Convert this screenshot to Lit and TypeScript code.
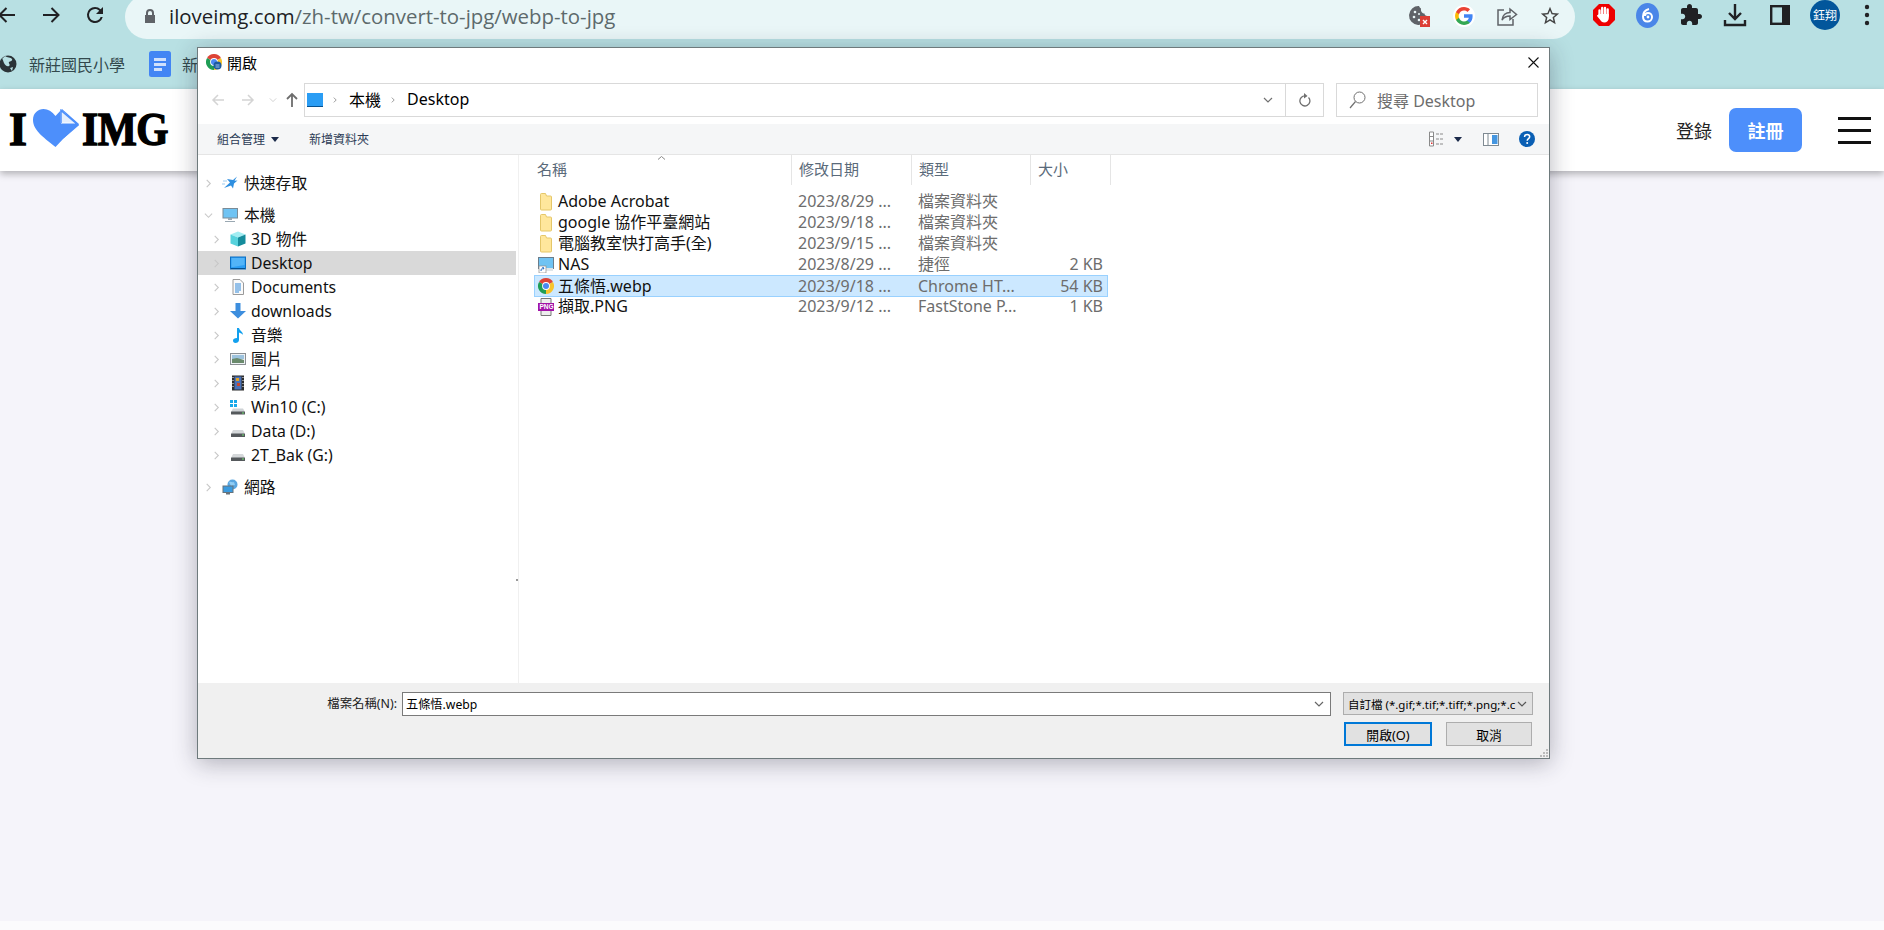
import { LitElement, html, css, svg } from "lit";
import { customElement } from "lit/decorators.js";

const chrome = (s: number, badge = false) => html`<svg width=${s} height=${s} viewBox="0 0 16 16">
  <path d="M1.07 4A8 8 0 0 1 14.93 4L8 8Z" fill="#dd4437"/>
  <path d="M14.93 4A8 8 0 0 1 8 16L8 8Z" fill="#f7c42d"/>
  <path d="M8 16A8 8 0 0 1 1.07 4L8 8Z" fill="#1f9d55"/>
  <circle cx="8" cy="8" r="3.9" fill="#fff"/><circle cx="8" cy="8" r="3" fill="#4a89f3"/>
  ${badge ? svg`<circle cx="11.500" cy="11.500" r="4" fill="#1d5a9e"/><path d="M9.500 11h4M9.500 13h4" stroke="#9cc3ee"/>` : ""}</svg>`;

const chev = svg`<path d="M3 1l4 4-4 4" fill="none" stroke="currentColor" stroke-width="1.2"/>`;
const chevDown = svg`<path d="M1 3l4 4 4-4" fill="none" stroke="currentColor" stroke-width="1.2"/>`;

const ic: Record<string, any> = {
  star: svg`<path d="M15 1.500 11 5 5 4l3 3.500L2 13l7-2.500 2 3 1-5 3.500-3-3 .2z" fill="#2f8fe0"/><path d="M1 6h4M0 9h3" stroke="#9ccbef"/>`,
  pc: svg`<rect x="1" y="1.500" width="14.500" height="9.500" fill="#6fc3f3" stroke="#7a8b97"/><path d="M6 11h4v2H6zM3 14h10v1H3z" fill="#9aa8b2"/>`,
  cube: svg`<path d="M8 .5 15.500 3.500 8 6.500.5 3.500z" fill="#a2edf2"/><path d="M.5 3.500 8 6.500V15.500L.5 12.500z" fill="#56d2dc"/><path d="M15.500 3.500 8 6.500V15.500L15.500 12.500z" fill="#158c9c"/>`,
  desk: svg`<rect x=".5" y="2" width="15" height="12" fill="#2a9df4" stroke="#0b6fc2"/><path d="M1 13h14v1H1z" fill="#06518f"/><path d="M1.500 3h13v7L3 12H1.500z" fill="#52b4f8"/>`,
  doc: svg`<path d="M3 .5h7l3.500 3.500v11.500H3z" fill="#fafafa" stroke="#9a9a9a"/><path d="M5 5h6M5 7h6M5 9h6M5 11h6M5 13h4" stroke="#2f87d8"/>`,
  down: svg`<path d="M5.500 0h5v8H16l-8 7.500L0 8h5.500z" fill="#3d8ede"/>`,
  music: svg`<path d="M7 1h2c.5 3 4 3.500 4 7-1-1.500-2.500-2-4-2.500V13c0 1.800-1.800 3-3.500 3S3 15 3 13.500 4.500 11 7 11z" fill="#12a0ee"/>`,
  pic: svg`<rect x=".5" y="2.500" width="15" height="11" fill="#eef2f5" stroke="#8a8f93"/><rect x="2" y="4" width="12" height="4" fill="#9dc3de"/><path d="M2 8l5-1 7 2v3H2z" fill="#6a8a6c"/>`,
  film: svg`<rect x="2" y=".5" width="12" height="15" fill="#2d2d2d"/><rect x="4.500" y="1.500" width="7" height="13" fill="#4a72b8"/><path d="M6 3h3v3H6z" fill="#e0a126"/><path d="M7 8h3v3H7z" fill="#c9462d"/><path d="M3 2v1M3 5v1M3 8v1M3 11v1M13 2v1M13 5v1M13 8v1M13 11v1" stroke="#fff"/>`,
  win: svg`<path d="M0 1h3v3H0zM4 1h3v3H4zM0 5h3v3H0zM4 5h3v3H4z" fill="#19a9ea"/><path d="M3 9.500h10l2 3.500H1z" fill="#cfd3d6"/><rect x="1" y="12.500" width="14" height="3" rx=".5" fill="#55595c"/><path d="M12 14h2" stroke="#6fe06f"/>`,
  drive: svg`<path d="M3 7h10l2 4H1z" fill="#d5d8da"/><rect x="1" y="10.500" width="14" height="3.500" rx=".5" fill="#55595c"/><path d="M12 12h2" stroke="#6fe06f"/>`,
  net: svg`<circle cx="10.500" cy="5.500" r="5" fill="#5aa6e0"/><path d="M7 3c2-1 3 1 5 0l1 3-4 1z" fill="#8fcdf5"/><rect x="1" y="7" width="10" height="6.500" fill="#3a9be0" stroke="#67727a"/><path d="M4 14.500h4" stroke="#67727a" stroke-width="2"/>`,
  link: svg`<rect x=".5" y=".5" width="15" height="11" fill="#6fc3f3" stroke="#6a7d8b"/><path d="M1 11h14v3H1z" fill="#dfe6ea"/><rect x="1" y="9" width="7" height="7" fill="#fff" stroke="#8a8a8a" stroke-width=".7"/><path d="M3 14c0-2 1-3 2.500-3M4.500 10.500l1.500.6-1 1.400" fill="none" stroke="#1561c0"/>`,
};

const tree = [
  [["快速存取", "star", 0]],
  [["本機", "pc", 0, 1], ["3D 物件", "cube", 1], ["Desktop", "desk", 1, 0, 1], ["Documents", "doc", 1], ["downloads", "down", 1], ["音樂", "music", 1], ["圖片", "pic", 1], ["影片", "film", 1], ["Win10 (C:)", "win", 1], ["Data (D:)", "drive", 1], ["2T_Bak (G:)", "drive", 1]],
  [["網路", "net", 0]],
] as any[][][];

const files = [
  ["Adobe Acrobat", "folder", "2023/8/29 ...", "檔案資料夾", ""],
  ["google 協作平臺網站", "folder", "2023/9/18 ...", "檔案資料夾", ""],
  ["電腦教室快打高手(全)", "folder", "2023/9/15 ...", "檔案資料夾", ""],
  ["NAS", "link", "2023/8/29 ...", "捷徑", "2 KB"],
  ["五條悟.webp", "chrome", "2023/9/18 ...", "Chrome HT...", "54 KB"],
  ["擷取.PNG", "png", "2023/9/12 ...", "FastStone P...", "1 KB"],
];

@customElement("app-root")
export class AppRoot extends LitElement {
  static styles = css`
    :host { display: block; position: relative; width: 1884px; height: 930px; overflow: hidden;
      font-family: "Noto Sans", "Noto Sans CJK TC", sans-serif; background: #f5f4fa; color: #000; }
    svg { display: block; flex: none; }
    .page { display: flex; flex-direction: column; height: 100%; }
    .toolbar { height: 40px; background: #b8e0e3; display: flex; align-items: flex-start; overflow: hidden; flex: none; color: #202124; }
    .nav { display: flex; gap: 20px; margin: 3px 18px 0 -5px; }
    .omni { flex: none; width: 1450px; height: 44px; margin-top: -5px; border-radius: 22px; background: #e9f6f7; display: flex; align-items: center; padding: 0 6px 2px 18px; box-sizing: border-box; }
    .url { font-family: "Open Sans", "Noto Sans", sans-serif; font-size: 20.4px; color: #5d6a6c; margin-left: 12px; flex: 1; white-space: nowrap; }
    .url b { font-weight: 400; color: #202124; }
    .omni-ic { display: flex; gap: 21px; align-items: center; margin-right: 8px; }
    .ext { display: flex; align-items: center; gap: 20px; margin-left: 17px; height: 30px; }
    .side-ic { margin-left: 3px; }
    .dots { margin-left: 4px; }
    .avatar { width: 30px; height: 30px; border-radius: 50%; background: #02569b; color: #fff; font-size: 12px; display: flex; align-items: center; justify-content: center; white-space: nowrap; }
    .bm { height: 48px; background: #b8e0e3; border-bottom: 1px solid #9dbcc0; display: flex; align-items: center; flex: none; font-size: 16px; color: #33494d; padding-bottom: 1px; margin-bottom: -1px; }
    .bm-a { display: flex; align-items: center; gap: 12px; margin-left: -1px; }
    .bm-b { display: flex; align-items: center; gap: 11px; margin-left: 24px; }
    .head { height: 82px; background: #fff; box-shadow: 0 3px 7px rgba(0,0,0,.28); display: flex; align-items: center; flex: none; position: relative; padding: 0 13px 0 9px; }
    .logo { display: flex; align-items: center; font-family: "Liberation Serif", serif; font-weight: 700; font-size: 46px; -webkit-text-stroke: 1.4px #000; line-height: 1; }
    .logo .img { letter-spacing: -.5px; transform: scaleX(.9); transform-origin: left center; }
    .logo svg { margin: 0 3px 4px 5px; }
    .login { margin-left: auto; font-size: 18px; color: #222; }
    .signup { width: 73px; height: 44px; border-radius: 7px; background: #4d8ffb; color: #fff; font-size: 18px; font-weight: 700; display: flex; align-items: center; justify-content: center; margin: 0 36px 0 17px; }
    .burger { display: flex; flex-direction: column; gap: 9px; width: 33px; }
    .burger i { display: block; height: 3px; background: #111; }
    .rest { flex: 1; }
    .strip { height: 9px; background: #fbfbfd; flex: none; }

    .win { position: absolute; left: 197px; top: 47px; width: 1353px; height: 712px; box-sizing: border-box; background: #fff; border: 1px solid #6e7a7c; box-shadow: 0 4px 22px rgba(30,30,50,.32); display: flex; flex-direction: column; }
    .title { height: 35px; display: flex; align-items: center; padding: 0 9px 7px 8px; box-sizing: border-box; font-size: 15px; gap: 5px; flex: none; }
    .title .x { margin-left: auto; }
    .addr { height: 34px; display: flex; align-items: center; flex: none; padding: 0 11px 0 0; }
    .arrows { display: flex; align-items: center; width: 106px; padding-left: 13px; box-sizing: border-box; color: #d0d0d0; }
    .fwd { margin-left: 16px; }
    .rec { margin-left: 14px; }
    .up { margin-left: 8px; }
    .box { height: 34px; box-sizing: border-box; border: 1px solid #d9d9d9; display: flex; align-items: center; font-size: 16px; padding-bottom: 1px; }
    .path { width: 1020px; padding-left: 2px; padding-bottom: 0; }
    .path span { white-space: nowrap; margin-top: -2px; }
    .sep { color: #777; margin: 0 11px 0 9px; }
    .path .dd { margin-left: auto; color: #707070; margin-right: 12px; }
    .path .rf { border-left: 1px solid #d9d9d9; height: 100%; width: 37px; display: flex; align-items: center; justify-content: center; color: #707070; flex: none; }
    .search { width: 202px; margin-left: 12px; padding-left: 12px; color: #6d6d6d; gap: 11px; }
    .cmd { height: 31px; margin-top: 7px; background: #f5f6f7; border-bottom: 1px solid #e5e5e5; box-sizing: border-box; display: flex; align-items: center; font-size: 12px; color: #2b3a55; flex: none; padding: 0 14px 0 19px; }
    .cmd .org { display: flex; align-items: center; gap: 6px; width: 92px; }
    .tri { width: 0; height: 0; border: 4px solid transparent; border-top: 5px solid #1b2a4a; border-bottom: 0; }
    .tri.view { margin: 0 21px 0 9px; }
    .help { margin-left: 20px; }
    .cmd .r { margin-left: auto; display: flex; align-items: center; }
    .body { flex: 1; display: flex; min-height: 0; position: relative; }
    .side { width: 321px; box-sizing: border-box; border-right: 1px solid #f0f0f0; padding: 16px 2px 0 0; flex: none; }
    .grp { margin-bottom: 8px; }
    .t { height: 24px; box-sizing: border-box; display: flex; align-items: center; font-size: 15.8px; white-space: nowrap; color: #111; padding: 0 0 1px 2px; }
    .t.l1 { padding-left: 10px; }
    .t .c { width: 16px; margin-right: 6px; display: flex; justify-content: center; color: #c8c8c8; padding-top: 1px; }
    .t.on { background: #d9d9d9; }
    .t svg.i { margin-right: 6px; margin-top: 1px; }
    .t.l1 svg.i { margin-right: 5px; }
    .grip-dot { position: absolute; left: 318px; top: 424px; width: 2px; height: 2px; background: #999; }
    .main { flex: 1; min-width: 0; }
    .hdr { display: grid; grid-template-columns: 273px 120px 119px 80px; width: 592px; height: 30px; font-size: 15px; color: #5a6a7a; position: relative; }
    .hdr div { padding: 0 0 3px 7px; border-right: 1px solid #e5e5e5; display: flex; align-items: center; }
    .hdr div:first-child { padding-left: 18px; }
    .sort { position: absolute; left: 138px; top: 0; color: #8a8a8a; }
    .rows { margin: 6px 0 0 15px; width: 574px; }
    .row { height: 21px; box-sizing: border-box; border: 1px solid transparent; display: grid; grid-template-columns: 263px 120px 100px 1fr; align-items: center; font-size: 16px; color: #6d6d6d; white-space: nowrap; line-height: 19px; }
    .row.sel { height: 22px; margin-bottom: -1px; background: #cce8ff; border-color: #99d1ff; }
    .row .n { display: flex; align-items: center; gap: 4px; padding-left: 3px; color: #111; height: 19px; }
    .row .s { text-align: right; padding-right: 4px; }
    .foot { height: 75px; background: #f0f0f0; flex: none; position: relative; padding-top: 9px; box-sizing: border-box; font-size: 12.5px; color: #222; }
    .f1 { display: grid; grid-template-columns: 199px 934px 202px; align-items: start; }
    .lab { text-align: right; line-height: 24px; font-size: 12.4px; }
    .inp { margin-left: 5px; height: 24px; box-sizing: border-box; border: 1px solid #7a7a7a; background: #fff; display: flex; align-items: center; padding: 0 3px; font-size: 12.2px; color: #000; justify-content: space-between; }
    .inp svg { color: #666; margin-right: 3px; }
    .sel-f { margin-left: 12px; height: 23px; box-sizing: border-box; border: 1px solid #adadad; background: #e1e1e1; display: flex; align-items: center; padding: 0 4px; font-size: 11.5px; color: #000; white-space: nowrap; justify-content: space-between; }
    .sel-f svg { color: #555; margin-right: 1px; }
    .f2 { display: flex; justify-content: flex-end; gap: 14px; margin-top: 6px; padding-right: 17px; }
    .btn { height: 24px; box-sizing: border-box; border: 1px solid #adadad; background: #e1e1e1; display: flex; align-items: center; justify-content: center; font-size: 12.8px; color: #000; width: 86px; }
    .btn.pri { width: 88px; border: 2px solid #0078d7; }
    .grip { position: absolute; right: 1px; bottom: 1px; }
    .png-t { font: 700 6.5px "Liberation Sans", sans-serif; fill: #fff; }
  `;

  private tIcon(name: string, s = 16) {
    return html`<svg class="i" width=${s} height=${s} viewBox="0 0 16 16">${ic[name]}</svg>`;
  }

  private fileIcon(kind: string) {
    if (kind === "chrome") return chrome(16);
    if (kind === "folder") return html`<svg width="16" height="18" viewBox="0 0 16 18"><path d="M2.500 1.500a1 1 0 0 1 1-1h4l1 2.500h4a1 1 0 0 1 1 1v12a1 1 0 0 1-1 1h-9a1 1 0 0 1-1-1z" fill="#ffe79c" stroke="#e5c769"/></svg>`;
    if (kind === "png") return html`<svg width="16" height="18" viewBox="0 0 16 18"><path d="M3 .5h10v17H3z" fill="#eee" stroke="#777"/><rect y="5" width="16" height="8" fill="#a313a8"/><text class="png-t" x="1.500" y="11.300">PNG</text></svg>`;
    return this.tIcon(kind);
  }

  private renderChromeBar() {
    return html`<div class="toolbar">
      <div class="nav">
        <svg width="24" height="24" viewBox="0 0 24 24"><path d="M20 12H5M11.500 5l-7 7 7 7" fill="none" stroke="#202124" stroke-width="2"/></svg>
        <svg width="24" height="24" viewBox="0 0 24 24"><path d="M4 12h15M12.500 5l7 7-7 7" fill="none" stroke="#202124" stroke-width="2"/></svg>
        <svg width="24" height="24" viewBox="0 0 24 24"><path d="M17.650 6.350A7.960 7.960 0 0 0 12 4a8 8 0 1 0 7.730 10h-2.080A6 6 0 1 1 12 6c1.660 0 3.140.69 4.220 1.780L13 11h7V4z" fill="#202124"/></svg>
      </div>
      <div class="omni">
        <svg width="14" height="16" viewBox="0 0 14 16"><path d="M3 7V5a4 4 0 0 1 8 0v2h1v8H2V7zM5 7h4V5a2 2 0 0 0-4 0z" fill="#5f6368"/></svg>
        <div class="url"><b>iloveimg.com</b>/zh-tw/convert-to-jpg/webp-to-jpg</div>
        <div class="omni-ic">
          <svg width="24" height="24" viewBox="0 0 24 24"><path d="M11 2a9.500 9.500 0 1 0 9 10c-2 .5-3.500-1-3.500-2.500C14.500 9.500 12.500 8 13 4.500c-1-.3-1.500-1.500-2-2.500z" fill="#5f6368"/><circle cx="7" cy="8" r="1.300" fill="#e9f6f7"/><circle cx="6" cy="13" r="1.300" fill="#e9f6f7"/><circle cx="11" cy="16" r="1.300" fill="#e9f6f7"/><circle cx="11" cy="10" r="1" fill="#e9f6f7"/><rect x="12" y="12" width="10" height="11" fill="#dc3f36"/><path d="M15 16l4 4M19 16l-4 4" stroke="#fff" stroke-width="1.400"/></svg>
          <svg width="22" height="22" viewBox="-1.500 -1.500 27 27"><circle cx="12" cy="12" r="13.500" fill="#fff"/><path d="M22.560 12.250c0-.78-.07-1.530-.2-2.250H12v4.260h5.920c-.26 1.370-1.040 2.530-2.210 3.310v2.770h3.570c2.080-1.920 3.280-4.740 3.280-8.090z" fill="#4285f4"/><path d="M12 23c2.970 0 5.460-.98 7.280-2.660l-3.570-2.770c-.98.66-2.230 1.060-3.710 1.060-2.860 0-5.290-1.930-6.160-4.530H2.180v2.840C3.990 20.530 7.700 23 12 23z" fill="#34a853"/><path d="M5.840 14.090c-.22-.66-.35-1.360-.35-2.090s.13-1.430.35-2.090V7.070H2.180C1.430 8.550 1 10.220 1 12s.43 3.450 1.180 4.930l2.850-2.220.81-.62z" fill="#fbbc05"/><path d="M12 5.380c1.620 0 3.060.56 4.210 1.640l3.150-3.150C17.450 2.090 14.970 1 12 1 7.700 1 3.990 3.470 2.180 7.070l3.660 2.840c.87-2.600 3.300-4.530 6.160-4.530z" fill="#ea4335"/></svg>
          <svg width="22" height="22" viewBox="0 0 22 22"><path d="M8 5H2v15h15v-6" fill="none" stroke="#5f6368" stroke-width="1.500"/><path d="M6 15c.5-5 4-7.500 8-7.500V4l6.500 5.500L14 14.500V11c-3.500 0-6 1-8 4z" fill="none" stroke="#5f6368" stroke-width="1.500"/></svg>
          <svg width="22" height="22" viewBox="0 0 24 24"><path d="M22 9.240l-7.190-.62L12 2 9.190 8.630 2 9.240l5.460 4.730L5.820 21 12 17.270 18.180 21l-1.630-7.030L22 9.240zM12 15.400l-3.760 2.270 1-4.280-3.320-2.880 4.380-.38L12 6.100l1.710 4.040 4.380.38-3.320 2.880 1 4.280L12 15.400z" fill="#444"/></svg>
        </div>
      </div>
      <div class="ext">
        <svg width="24" height="24" viewBox="0 0 24 24"><path d="M7 1h10l6 6v10l-6 6H7l-6-6V7z" fill="#e00"/><path d="M7.500 13V7.500M10.200 13V5M13 13V5M15.700 13V6.500" stroke="#fff" stroke-width="2.300" stroke-linecap="round"/><path d="M6.400 11h10.400v4c0 2.500-2 4.500-4.500 4.500-2 0-3.200-1-4-2.500L5.200 13.200c-.6-1 .8-2 1.600-1.200z" fill="#fff"/></svg>
        <svg width="23" height="25" viewBox="0 0 23 25"><ellipse cx="11.500" cy="12.500" rx="11.500" ry="12.500" fill="#4a86e8"/><path d="M13 6c-4 1-6 4-6 7.500S9 18.500 11.500 18.500 16 16.500 16 14s-2-4-4-4-3 1.500-3 3" fill="none" stroke="#fff" stroke-width="2"/><circle cx="12" cy="14" r="1.400" fill="#fff"/></svg>
        <svg width="24" height="24" viewBox="0 0 24 24"><path d="M20.500 11H19V7c0-1.100-.9-2-2-2h-4V3.500C13 2.120 11.880 1 10.500 1S8 2.120 8 3.500V5H4c-1.100 0-1.990.9-1.990 2v3.800H3.500c1.490 0 2.700 1.210 2.700 2.700s-1.210 2.700-2.700 2.700H2V20c0 1.100.9 2 2 2h3.800v-1.500c0-1.490 1.210-2.700 2.700-2.700 1.490 0 2.700 1.210 2.700 2.700V22H17c1.100 0 2-.9 2-2v-4h1.500c1.380 0 2.500-1.120 2.500-2.500S21.880 11 20.500 11z" fill="#202124"/></svg>
        <svg width="24" height="24" viewBox="0 0 24 24"><path d="M12 1v14M6 10l6 6 6-6M2 17v5h20v-5" fill="none" stroke="#202124" stroke-width="2.400"/></svg>
        <svg class="side-ic" width="20" height="20" viewBox="0 0 20 20"><rect x="1.200" y="1.200" width="17.600" height="17.600" fill="none" stroke="#202124" stroke-width="2.400"/><rect x="12" y="1" width="7" height="18" fill="#202124"/></svg>
        <div class="avatar">鈺翔</div>
        <svg class="dots" width="6" height="22" viewBox="0 0 6 22"><circle cx="3" cy="3" r="2.200" fill="#202124"/><circle cx="3" cy="11" r="2.200" fill="#202124"/><circle cx="3" cy="19" r="2.200" fill="#202124"/></svg>
      </div>
    </div>`;
  }

  private renderPage() {
    return html`<div class="page">
      ${this.renderChromeBar()}
      <div class="bm">
        <div class="bm-a">
          <svg width="18" height="18" viewBox="0 0 18 18"><circle cx="9" cy="9" r="8.500" fill="#2b3337"/><path d="M6 1c2 2 6 1 7 3s-2 2-3 3 2 3 0 4-4-1-5-3-1-4-2-4zM11 13l3-1-1 4z" fill="#b8e0e3"/></svg>
          <span>新莊國民小學</span>
        </div>
        <div class="bm-b">
          <svg width="22" height="26" viewBox="0 0 22 26"><rect width="22" height="26" rx="2.500" fill="#4285f4"/><path d="M5 7h12v3H5zM5 12h12v3H5zM5 17h8v3H5z" fill="#cfe0fc"/></svg>
          <span>新</span>
        </div>
      </div>
      <div class="head">
        <div class="logo">
          <span>I</span>
          <svg width="47" height="38" viewBox="0 0 47 38">
            <path d="M23.500 38C14 30 1 22 1 11 1 4 6 0 11.500 0 16 0 20 2.500 23.500 7L30 0 47 15 32 29z" fill="#4d8ffb"/>
            <path d="M29 1v13h14z" fill="#e6effd" stroke="#fff"/>
            <path d="M29 14V1.500L46 16 31 29" fill="none" stroke="#4d8ffb" stroke-width="1.500"/>
          </svg>
          <span class="img">IMG</span>
        </div>
        <div class="login">登錄</div>
        <div class="signup">註冊</div>
        <div class="burger"><i></i><i></i><i></i></div>
      </div>
      <div class="rest"></div>
      <div class="strip"></div>
    </div>`;
  }

  private renderDialog() {
    return html`<div class="win">
      <div class="title">
        ${chrome(16, true)}<span>開啟</span>
        <svg class="x" width="13" height="13" viewBox="0 0 13 13"><path d="M1.500 1.500l10 10M11.500 1.500l-10 10" stroke="#111" stroke-width="1.100"/></svg>
      </div>
      <div class="addr">
        <div class="arrows">
          <svg width="14" height="14" viewBox="0 0 14 14"><path d="M13 7H2M7 2 2 7l5 5" fill="none" stroke="#d4d4d4" stroke-width="1.500"/></svg>
          <svg class="fwd" width="14" height="14" viewBox="0 0 14 14"><path d="M1 7h11M7 2l5 5-5 5" fill="none" stroke="#d4d4d4" stroke-width="1.500"/></svg>
          <svg class="rec" width="8" height="8" viewBox="0 0 10 10">${chevDown}</svg>
          <svg class="up" width="14" height="16" viewBox="0 0 14 16"><path d="M7 15V2M2 7l5-5 5 5" fill="none" stroke="#6d6d6d" stroke-width="1.800"/></svg>
        </div>
        <div class="box path">
          <svg width="16" height="14" viewBox="0 0 16 14"><rect width="16" height="14" fill="#2a9df4"/><path d="M0 13h16v1H0z" fill="#06518f"/></svg>
          <svg class="sep" width="6" height="8" viewBox="0 0 10 10">${chev}</svg><span>本機</span>
          <svg class="sep" width="6" height="8" viewBox="0 0 10 10">${chev}</svg><span>Desktop</span>
          <svg class="dd" width="10" height="10" viewBox="0 0 10 10">${chevDown}</svg>
          <div class="rf"><svg width="13" height="14" viewBox="0 0 13 14"><path d="M10.500 4.500a5 5 0 1 1-3-1.500" fill="none" stroke="#707070" stroke-width="1.300"/><path d="M6 0l3.500 3L6 5.500z" fill="#707070"/></svg></div>
        </div>
        <div class="box search">
          <svg width="17" height="18" viewBox="0 0 17 18"><circle cx="10.500" cy="6.500" r="5.500" fill="none" stroke="#707070"/><path d="M6.500 10.500 1 17" stroke="#707070" stroke-width="1.200"/></svg>
          <span>搜尋 Desktop</span>
        </div>
      </div>
      <div class="cmd">
        <div class="org"><span>組合管理</span><i class="tri"></i></div>
        <span>新增資料夾</span>
        <div class="r">
          <svg width="16" height="16" viewBox="0 0 16 16"><path d="M.5 1h4v14h-4zM.5 5.500h4M.5 10h4" fill="#fff" stroke="#8a8a8a"/><path d="M7 3h8M7 8h8M7 13h8" stroke="#8a8a8a" stroke-dasharray="3 1"/><rect x="2" y="11.500" width="1.500" height="1.500" fill="#d33"/></svg>
          <i class="tri view"></i>
          <svg width="16" height="13" viewBox="0 0 16 13"><rect x=".5" y=".5" width="15" height="12" fill="#fff" stroke="#7f8a92"/><rect x="9" y="2" width="5.500" height="9" fill="#4596e0"/><path d="M5 1v11" stroke="#7f8a92"/></svg>
          <svg class="help" width="16" height="16" viewBox="0 0 16 16"><circle cx="8" cy="8" r="8" fill="#0a5fb4"/><path d="M5.500 6c0-1.500 1-2.500 2.600-2.500S10.700 4.500 10.700 5.800c0 1.800-2.500 1.900-2.500 3.900" fill="none" stroke="#fff" stroke-width="1.500"/><circle cx="8.200" cy="12" r="1" fill="#fff"/></svg>
        </div>
      </div>
      <div class="body">
        <div class="side">
          ${tree.map((g) => html`<div class="grp">${g.map((r: any) => html`
            <div class="t ${r[2] ? "l1" : ""} ${r[4] ? "on" : ""}">
              <span class="c"><svg width="9" height="9" viewBox="0 0 10 10">${r[3] ? chevDown : chev}</svg></span>
              ${this.tIcon(r[1])}<span>${r[0]}</span>
            </div>`)}</div>`)}
        </div>
        <i class="grip-dot"></i>
        <div class="main">
          <div class="hdr">
            <div>名稱</div><div>修改日期</div><div>類型</div><div>大小</div>
            <svg class="sort" width="9" height="6" viewBox="0 0 9 6"><path d="M1 4.500l3.500-3 3.500 3" fill="none" stroke="currentColor"/></svg>
          </div>
          <div class="rows">
            ${files.map((f) => html`<div class="row ${f[1] === "chrome" ? "sel" : ""}">
              <div class="n">${this.fileIcon(f[1])}<span>${f[0]}</span></div>
              <div>${f[2]}</div><div>${f[3]}</div><div class="s">${f[4]}</div>
            </div>`)}
          </div>
        </div>
      </div>
      <div class="foot">
        <div class="f1">
          <div class="lab">檔案名稱(N):</div>
          <div class="inp"><span>五條悟.webp</span><svg width="10" height="10" viewBox="0 0 10 10">${chevDown}</svg></div>
          <div class="sel-f"><span>自訂檔 (*.gif;*.tif;*.tiff;*.png;*.c</span><svg width="10" height="10" viewBox="0 0 10 10">${chevDown}</svg></div>
        </div>
        <div class="f2"><div class="btn pri">開啟(O)</div><div class="btn">取消</div></div>
        <svg class="grip" width="9" height="9" viewBox="0 0 9 9"><path d="M7 1h2v2H7zM4 4h2v2H4zM7 4h2v2H7zM1 7h2v2H1zM4 7h2v2H4zM7 7h2v2H7z" fill="#bbb"/></svg>
      </div>
    </div>`;
  }

  render() {
    return html`${this.renderPage()}${this.renderDialog()}`;
  }
}
